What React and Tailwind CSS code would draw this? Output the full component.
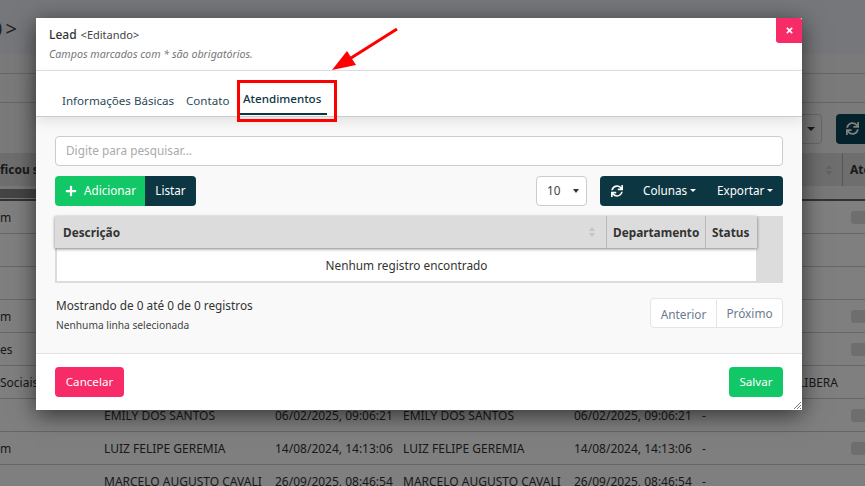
import { FaPlus, FaSync, FaTimes } from "react-icons/fa";

const rows = [
  { first: "m", toggle: true },
  {},
  {},
  { first: "m", toggle: true },
  { first: "es", toggle: true },
  { first: "Sociais", extra: "LIBERA" },
  { name: "EMILY DOS SANTOS", date: "06/02/2025, 09:06:21", toggle: true },
  { first: "m", name: "LUIZ FELIPE GEREMIA", date: "14/08/2024, 14:13:06", toggle: true },
  { name: "MARCELO AUGUSTO CAVALI", date: "26/09/2025, 08:46:54" },
];

function Caret({ className }) {
  return (
    <span
      className={`inline-block w-0 h-0 border-x-[4px] border-x-transparent border-t-[4px] ${className}`}
    />
  );
}

function SortArrows({ className }) {
  return (
    <span className={`flex flex-col gap-[2px] ${className}`}>
      <span className="w-0 h-0 border-x-[3px] border-x-transparent border-b-[4px] border-b-[#c4c4c4]" />
      <span className="w-0 h-0 border-x-[3px] border-x-transparent border-t-[4px] border-t-[#c4c4c4]" />
    </span>
  );
}

function Background() {
  return (
    <div className="w-[865px] h-[486px] overflow-hidden bg-white text-[12px] text-[#333]">
      <div className="h-[54px] bg-[#eceef5] flex items-center text-[20px] text-[#444] pt-[4px]">
        <span className="-ml-[9px]">0</span>
        <span className="ml-[3px]">&gt;</span>
      </div>
      <div className="h-[20px] border-b border-[#ccc] bg-[#f5f5f5]" />
      <div className="h-[29px] border-b border-[#ccc] bg-[#f5f5f5]" />
      <div className="h-[50px] bg-[#f5f5f5] flex items-center justify-end pt-[1px]">
        <div className="w-[30px] h-[30px] mr-[14px] border border-[#ccc] rounded flex items-center justify-center">
          <Caret className="border-t-[#333] ml-[8px]" />
        </div>
        <div className="w-[40px] h-[30px] -mr-[11px] bg-[#084456] rounded flex items-center pl-[10px] text-white">
          <FaSync className="w-[13px] h-[13px]" />
        </div>
      </div>
      <div className="h-[33px] bg-[#dcdcdc] flex items-center font-bold">
        <span className="flex-1">ficou s</span>
        <SortArrows className="mr-[10px]" />
        <span className="h-full w-[23px] border-l border-[#aaa] pl-[7px] leading-[33px] overflow-hidden whitespace-nowrap">
          Atendimentos
        </span>
      </div>
      <div className="h-[15px] bg-[#f0f0f0] border-b-2 border-[#666] pt-[3px]">
        <div className="w-[300px] h-[9px] bg-[#888]" />
      </div>
      {rows.map((row, i) => (
        <div key={i} className="h-[33px] border-b border-[#ccc] flex items-center whitespace-nowrap pt-[1px]">
          <span className="w-[104px] shrink-0">{row.first}</span>
          <span className="w-[171px] shrink-0">{row.name}</span>
          <span className="w-[128px] shrink-0">{row.date}</span>
          <span className="w-[171px] shrink-0">{row.name}</span>
          <span className="w-[128px] shrink-0">{row.date}</span>
          <span className="w-[149px] shrink-0">
            {row.name && "-"}
            {row.extra && <span className="block text-right pr-[13px]">{row.extra}</span>}
          </span>
          {row.toggle && <span className="w-[30px] h-[13px] shrink-0 rounded-[3px] bg-[#ddd]" />}
        </div>
      ))}
    </div>
  );
}

function TableHead() {
  return (
    <div className="w-[702px] h-[32px] bg-[#dcdcdc] flex items-center font-bold text-[#333] shadow-[0_1px_3px_rgba(0,0,0,0.5)] relative">
      <span className="flex-1 pl-[8px] pt-[1px]">Descrição</span>
      <SortArrows className="mr-[11px]" />
      <span className="w-[99px] h-full border-l border-[#bbb] pl-[6px] leading-[32px] whitespace-nowrap">
        Departamento
      </span>
      <span className="w-[52px] h-full border-l border-[#bbb] pl-[6px] leading-[32px]">
        Status
      </span>
    </div>
  );
}

function Modal() {
  return (
    <div className="absolute left-[36px] top-[18px] w-[766px] h-[392px] bg-white flex flex-col shadow-[0_5px_22px_rgba(0,0,0,0.6)] text-[11.8px] text-[#333]">
      <div className="h-[53px] shrink-0 border-b border-[#dfdfe6] pl-[13px] pt-[8px] relative">
        <div className="flex items-center gap-[4px] leading-[18px]">
          <span className="font-medium text-[12px] text-[#333]">Lead</span>
          <span className="text-[11px] text-[#444]">&lt;Editando&gt;</span>
        </div>
        <div className="italic text-[10.7px] text-[#777] mt-[2px]">
          Campos marcados com * são obrigatórios.
        </div>
        <button className="absolute right-0 top-0 w-[26px] h-[25px] bg-[#f72b67] rounded-bl-[3px] rounded-tr-[2px] flex items-center justify-center text-white">
          <FaTimes className="w-[9px] h-[9px]" />
        </button>
      </div>

      <div className="h-[46px] shrink-0 border-b border-[#ccc] pl-[26px] relative shadow-[0_5px_12px_rgba(0,0,0,0.09)] flex items-end text-[11.6px] text-[#2b4a55]">
        <span className="w-[124px] pb-[7px]">Informações Básicas</span>
        <span className="w-[54px] pb-[7px]">Contato</span>
        <span className="h-[28px] w-[87px] pl-[3px] pt-[2px] mb-[1px] font-medium text-[#0c3642] leading-[20px] border-b-2 border-[#0c3642] whitespace-nowrap">
          Atendimentos
        </span>
      </div>

      <div className="flex-1 bg-[#f9f9f9] border-b border-[#e3e3e3] px-[19px] pt-[19px]">
        <div className="h-[30px] bg-white border border-[#ccc] rounded flex items-center pl-[10px] text-[#aaa]">
          Digite para pesquisar...
        </div>

        <div className="mt-[10px] h-[30px] flex items-center">
          <button className="w-[90px] h-[30px] bg-[#11c766] rounded-l flex items-center pl-[10px] gap-[7px] text-white text-[11.7px]">
            <FaPlus className="w-[12px] h-[12px]" />
            Adicionar
          </button>
          <button className="w-[51px] h-[30px] bg-[#0c3642] rounded-r text-white text-[11.7px]">
            Listar
          </button>
          <div className="ml-auto w-[51px] h-[30px] bg-white border border-[#ccc] rounded flex items-center justify-between pl-[10px] pr-[7px] text-[#444]">
            10
            <Caret className="border-t-[#333] !border-x-[3px]" />
          </div>
          <div className="ml-[13px] w-[183px] h-[30px] bg-[#0c3642] rounded flex items-center text-white text-[11.7px]">
            <span className="w-[33px] flex justify-center">
              <FaSync className="w-[12px] h-[12px]" />
            </span>
            <span className="w-[74px] pl-[10px] flex items-center gap-[3px]">
              Colunas
              <Caret className="border-t-white !border-x-[3px] !border-t-[3px]" />
            </span>
            <span className="pl-[10px] flex items-center gap-[3px]">
              Exportar
              <Caret className="border-t-white !border-x-[3px] !border-t-[3px]" />
            </span>
          </div>
        </div>

        <div className="mt-[10px] h-[67px] bg-[#dcdcdc]">
          <TableHead />
          <div className="ml-[2px] w-[699px] h-[33px] pt-[2px] bg-white flex items-center justify-center text-[#333]">
            Nenhum registro encontrado
          </div>
        </div>

        <div className="mt-[15px] flex justify-between">
          <div className="pl-[1px] -mt-[2px]">
            <div className="leading-[18px]">Mostrando de 0 até 0 de 0 registros</div>
            <div className="text-[10.2px] mt-[3px] leading-[16px] text-[#444]">
              Nenhuma linha selecionada
            </div>
          </div>
          <div className="w-[133px] h-[30px] bg-white border border-[#e3e3e8] rounded flex items-center text-[#6b7a90] text-[11.8px] pt-[1px]">
            <span className="w-[66px] text-center border-r border-[#e3e3e8] leading-[28px]">Anterior</span>
            <span className="flex-1 text-center">Próximo</span>
          </div>
        </div>
      </div>

      <div className="h-[56px] shrink-0 px-[19px] flex items-center justify-between pb-[1px] relative">
        <button className="w-[69px] h-[30px] bg-[#f72b67] rounded text-white text-[11.6px]">Cancelar</button>
        <button className="w-[54px] h-[30px] bg-[#11c766] rounded text-white text-[11.6px]">Salvar</button>
        <svg className="absolute right-0 bottom-0" width="9" height="9" viewBox="0 0 9 9">
          <path d="M1 8 8 1M4 8l4-4M7 8l1-1" stroke="#777" strokeWidth="1" fill="none" />
        </svg>
      </div>
    </div>
  );
}

export default function App() {
  return (
    <div className="relative w-[865px] h-[486px] overflow-hidden font-['Noto_Sans',sans-serif]">
      <Background />
      <div className="absolute inset-0 bg-black/50" />
      <Modal />
      {/* highlight box and arrow drawn on top of the screenshot */}
      <div className="absolute left-[237px] top-[80px] w-[100px] h-[42px] border-[3px] border-[#f00]" />
      <svg className="absolute left-[325px] top-[22px]" width="80" height="56" viewBox="0 0 80 56">
        <path d="M72 7 26 36" stroke="#f00" strokeWidth="3" fill="none" />
        <path d="M7 48 22 29 31 43Z" fill="#f00" />
      </svg>
    </div>
  );
}
